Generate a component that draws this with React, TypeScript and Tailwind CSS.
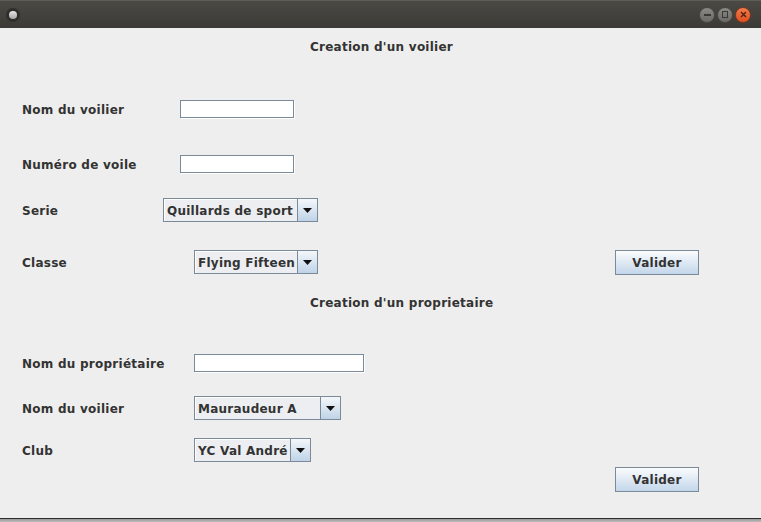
import React from 'react';

const TextField = ({ className }: { className: string }) => (
  <div className={`h-[18px] bg-white border border-[#7a8a99] shadow-[1px_1px_0_#ffffff] ${className}`}></div>
);

const Combo = ({ value, className }: { value: string; className: string }) => (
  <div className={`flex h-[24px] border border-[#7a8a99] bg-[#eceef1] ${className}`}>
    <div className="flex-1 flex items-center pl-[2px] pt-[1px] border-t border-l border-white whitespace-nowrap overflow-hidden">
      {value}
    </div>
    <div className="w-[20px] flex items-center justify-center border-l border-[#7a8a99] bg-gradient-to-b from-[#f4f7fa] to-[#bfd3e7]">
      <svg width="9" height="5" viewBox="0 0 9 5">
        <path d="M0 0 H9 L4.5 5 Z" fill="#111111" />
      </svg>
    </div>
  </div>
);

const Button = ({ label }: { label: string }) => (
  <button className="w-[84px] h-[25px] border border-[#7a8a99] bg-gradient-to-b from-[#fbfcfd] to-[#c3d6ea] text-[#333333] font-bold text-[12px] tracking-[0.25px]">
    {label}
  </button>
);

const App = () => {
  return (
    <div className="w-[761px] h-[522px] flex flex-col font-['DejaVu_Sans',sans-serif] text-[12px] font-bold text-[#333333] tracking-[0.25px]">
      {/* Title bar */}
      <div className="h-[28px] flex items-center px-[5px] border-t border-[#5d5c57] bg-gradient-to-b from-[#4a4944] to-[#3b3a36]">
        <div className="w-[14px] h-[14px] rounded-full bg-[#2f2e2b] flex items-center justify-center ml-[1px]">
          <div className="w-[8px] h-[8px] rounded-full bg-gradient-to-b from-[#e8e8e8] to-[#a5a5a5]"></div>
        </div>
        <div className="flex-1"></div>
        <div className="flex items-center gap-[2px] mr-[5px]">
          <div className="w-[16px] h-[16px] rounded-full bg-gradient-to-b from-[#8a8985] to-[#6a6965] flex items-center justify-center border border-[#4a4945]">
            <div className="w-[7px] h-[2px] bg-[#3a3935]"></div>
          </div>
          <div className="w-[16px] h-[16px] rounded-full bg-gradient-to-b from-[#8a8985] to-[#6a6965] flex items-center justify-center border border-[#4a4945]">
            <div className="w-[6px] h-[7px] border border-[#3a3935]"></div>
          </div>
          <div className="w-[16px] h-[16px] rounded-full bg-gradient-to-b from-[#f47a4a] to-[#e04e1c] flex items-center justify-center border border-[#7a3a20]">
            <svg width="7" height="7" viewBox="0 0 7 7">
              <path d="M1 1 L6 6 M6 1 L1 6" stroke="#4a2010" strokeWidth="1.3" />
            </svg>
          </div>
        </div>
      </div>

      {/* Content */}
      <div className="flex-1 flex flex-col bg-[#eeeeee] border-b border-[#2e2e2e]">
        <div className="h-[20px] mt-[9px] pl-[310px] flex items-center">Creation d'un voilier</div>

        <div className="h-[18px] mt-[43px] pl-[22px] flex items-center">
          <div className="w-[158px] pt-[1px]">Nom du voilier</div>
          <TextField className="w-[114px]" />
        </div>

        <div className="h-[18px] mt-[37px] pl-[22px] flex items-center">
          <div className="w-[158px] pt-[1px]">Numéro de voile</div>
          <TextField className="w-[114px]" />
        </div>

        <div className="h-[24px] mt-[25px] pl-[22px] flex items-center">
          <div className="w-[141px] pt-[1px]">Serie</div>
          <Combo value="Quillards de sport" className="w-[155px]" />
        </div>

        <div className="h-[25px] mt-[28px] pl-[22px] flex items-start">
          <div className="w-[172px] h-[24px] pt-[1px] flex items-center">Classe</div>
          <Combo value="Flying Fifteen" className="w-[124px]" />
          <div className="ml-[297px]">
            <Button label="Valider" />
          </div>
        </div>

        <div className="h-[20px] mt-[18px] pl-[310px] flex items-center">Creation d'un proprietaire</div>

        <div className="h-[18px] mt-[41px] pl-[22px] flex items-center">
          <div className="w-[172px] pt-[1px]">Nom du propriétaire</div>
          <TextField className="w-[170px]" />
        </div>

        <div className="h-[24px] mt-[24px] pl-[22px] flex items-center">
          <div className="w-[172px] pt-[1px]">Nom du voilier</div>
          <Combo value="Mauraudeur A" className="w-[147px]" />
        </div>

        <div className="h-[24px] mt-[18px] pl-[22px] flex items-center">
          <div className="w-[172px] pt-[1px]">Club</div>
          <Combo value="YC Val André" className="w-[117px]" />
        </div>

        <div className="h-[25px] mt-[5px] pl-[615px] flex">
          <Button label="Valider" />
        </div>
      </div>
      <div className="h-[3px] bg-gradient-to-b from-[#9a9a9a] to-[#bdbdbd]"></div>
    </div>
  );
};

export default App;
